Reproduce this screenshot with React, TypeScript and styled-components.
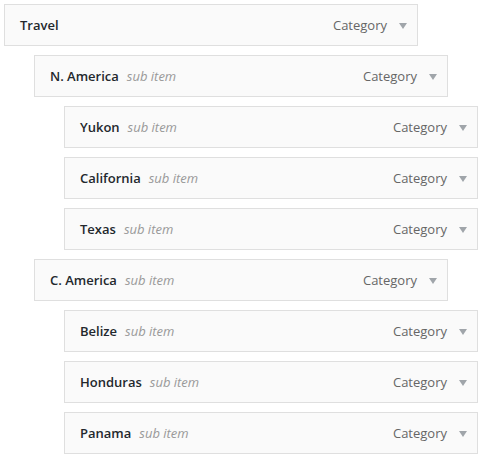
import React from 'react'
import styled, {createGlobalStyle} from 'styled-components'

const GlobalStyle = createGlobalStyle`
  body {
    margin: 0;
    background: #fff;
    font-family: "Open Sans", "Noto Sans", sans-serif;
  }
`

const List = styled.ul`
  list-style: none;
  margin: 0;
  padding: 4px;
  display: flex;
  flex-direction: column;
  gap: 9px;
`

const Item = styled.li<{$depth: number}>`
  margin-left: ${(p) => p.$depth * 30}px;
`

const Handle = styled.div`
  box-sizing: border-box;
  width: 414px;
  height: 42px;
  display: flex;
  align-items: center;
  padding: 0 10px 0 15px;
  background: #fafafa;
  border: 1px solid #dfdfdf;
  font-size: 13px;
  line-height: 20px;
`

const Title = styled.span`
  font-weight: 600;
  color: #23282d;
`

const SubItem = styled.span`
  margin-left: 8px;
  font-style: italic;
  color: #999;
`

const Controls = styled.span`
  margin-left: auto;
  display: flex;
  align-items: center;
  gap: 12px;
`

const Type = styled.span`
  color: #666;
`

const Arrow = styled.span`
  width: 0;
  height: 0;
  border-left: 4px solid transparent;
  border-right: 4px solid transparent;
  border-top: 6px solid #a0a5aa;
  margin-top: 2px;
`

type MenuItem = {
  title: string
  depth: number
}

const items: MenuItem[] = [
  {title: 'Travel', depth: 0},
  {title: 'N. America', depth: 1},
  {title: 'Yukon', depth: 2},
  {title: 'California', depth: 2},
  {title: 'Texas', depth: 2},
  {title: 'C. America', depth: 1},
  {title: 'Belize', depth: 2},
  {title: 'Honduras', depth: 2},
  {title: 'Panama', depth: 2},
]

const App = () => (
  <>
    <GlobalStyle />
    <List>
      {items.map((item) => (
        <Item key={item.title} $depth={item.depth}>
          <Handle>
            <Title>{item.title}</Title>
            {item.depth > 0 && <SubItem>{'sub item'}</SubItem>}
            <Controls>
              <Type>{'Category'}</Type>
              <Arrow />
            </Controls>
          </Handle>
        </Item>
      ))}
    </List>
  </>
)

export default App
